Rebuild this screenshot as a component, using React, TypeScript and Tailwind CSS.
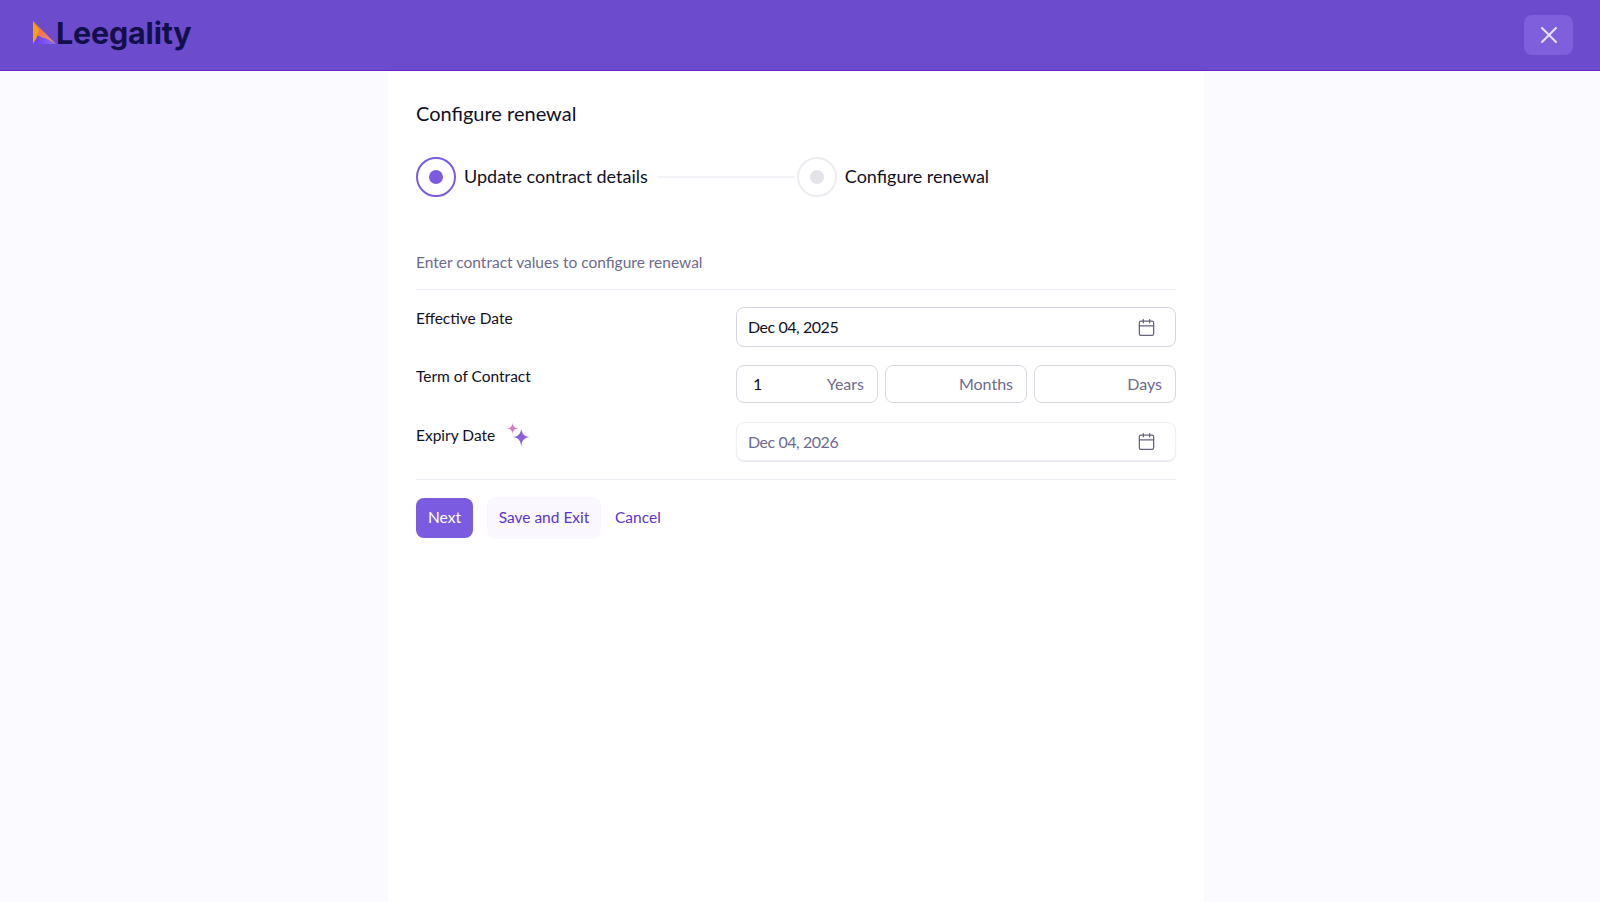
import { X, Calendar } from 'lucide-react';

const font = "font-['Lato','Noto_Sans',sans-serif]";

function Logo() {
    return (
        <div className="flex items-center mb-1">
            <svg width="23" height="23" viewBox="0 0 23 23" className="shrink-0 -mt-px">
                <defs>
                    <linearGradient id="logoBottom" x1="0" y1="0" x2="1" y2="0">
                        <stop offset="0" stopColor="#6a3df0" />
                        <stop offset="1" stopColor="#8f6af5" />
                    </linearGradient>
                    <linearGradient id="logoMid" x1="0" y1="0" x2="1" y2="1">
                        <stop offset="0" stopColor="#f4663f" />
                        <stop offset="1" stopColor="#f28a78" />
                    </linearGradient>
                </defs>
                <polygon points="0,0 23,23 5,15" fill="url(#logoMid)" />
                <polygon points="0,0 6,9 4,16 0,23" fill="#f5a30c" />
                <polygon points="0.5,23 5,15 14,18 23,23" fill="url(#logoBottom)" />
            </svg>
            <span className="text-[30.5px] leading-none font-bold text-[#12104a] tracking-[-0.2px] font-['Inter',sans-serif]">Leegality</span>
        </div>
    );
}

function Step({ label, active }: { label: string; active?: boolean }) {
    return (
        <div className="flex items-center gap-2">
            <div
                className={
                    active
                        ? 'w-10 h-10 rounded-full border-2 border-[#7b5be0] flex items-center justify-center bg-white'
                        : 'w-10 h-10 rounded-full border-2 border-[#ececf2] flex items-center justify-center bg-white'
                }
            >
                <div className={active ? 'w-3.5 h-3.5 rounded-full bg-[#7b5be0]' : 'w-3.5 h-3.5 rounded-full bg-[#e3e3ea]'} />
            </div>
            <span className="text-lg leading-6 -mt-0.5 text-[#11101f]">{label}</span>
        </div>
    );
}

function DateField({ value, muted }: { value: string; muted?: boolean }) {
    return (
        <div
            className={
                muted
                    ? 'h-[39px] mt-px rounded-lg border border-[#efeef5] shadow-[0_1px_1px_#e6e5ee] flex items-center justify-between pl-[11px] pr-[19px] text-base tracking-[-0.45px] text-[#6d6a8e]'
                    : 'h-10 rounded-lg border border-[#d5d4e0] flex items-center justify-between pl-[11px] pr-[19px] text-base tracking-[-0.45px] text-[#11101f]'
            }
        >
            <span>{value}</span>
            <Calendar size={19} strokeWidth={1.6} className="text-[#65637f]" />
        </div>
    );
}

function TermField({ value, unit }: { value?: string; unit: string }) {
    return (
        <div className="flex-1 h-[38px] rounded-lg border border-[#d9d8e3] flex items-center justify-between pl-4 pr-[13px] text-base">
            <span className="text-[#11101f]">{value}</span>
            <span className="text-[#6d6a8e]">{unit}</span>
        </div>
    );
}

function Sparkles() {
    return (
        <svg width="26" height="26" viewBox="0 0 24 24" className="ml-2.5 -mt-0.5">
            <path d="M7 0 C7.4 3.2 8.8 4.6 12 5 C8.8 5.4 7.4 6.8 7 10 C6.6 6.8 5.2 5.4 2 5 C5.2 4.6 6.6 3.2 7 0 Z" fill="#d67fc0" />
            <path d="M15 5 C15.6 10 17.5 12.4 23 13 C17.5 13.6 15.6 16 15 22 C14.4 16 12.5 13.6 7 13 C12.5 12.4 14.4 10 15 5 Z" fill="#8a63dc" />
        </svg>
    );
}

export default function App() {
    return (
        <div className={`${font} w-full h-[902px] flex flex-col bg-[#fbfaff] overflow-hidden`}>
            {/* 상단 바 */}
            <header className="h-[71px] shrink-0 bg-[#6c4bcc] border-b border-[#6a1fd0] flex items-center justify-between pl-[33px] pr-[27px]">
                <Logo />
                <button className="w-[49px] h-10 rounded-lg bg-[#7f5fdc] flex items-center justify-center">
                    <X size={28} strokeWidth={1.8} className="text-[#e4e0f5]" />
                </button>
            </header>

            {/* 본문 패널 */}
            <div className="flex-1 flex justify-center pr-2">
                <main className="w-[816px] bg-white pl-7 pr-7 pt-[29px]">
                    <h1 className="text-xl leading-[26px] text-[#11101f]">Configure renewal</h1>

                    <div className="flex items-center mt-[31px]">
                        <Step label="Update contract details" active />
                        <div className="w-[138px] h-0.5 bg-[#f3f3f8] ml-[9px] mr-0.5" />
                        <Step label="Configure renewal" />
                    </div>

                    <p className="mt-[55px] text-[15.5px] leading-5 text-[#6d6a8e] pb-[17px] border-b border-[#eceaf2]">Enter contract values to configure renewal</p>

                    <div className="grid grid-cols-[320px_1fr] gap-y-[18px] pt-[17px] pb-[18px] border-b border-[#eceaf2]">
                        <div className="text-[15.5px] leading-5 text-[#11101f] pt-px">Effective Date</div>
                        <DateField value="Dec 04, 2025" />

                        <div className="text-[15.5px] leading-5 text-[#11101f] pt-px">Term of Contract</div>
                        <div className="flex gap-[7px]">
                            <TermField value="1" unit="Years" />
                            <TermField unit="Months" />
                            <TermField unit="Days" />
                        </div>

                        <div className="flex items-start text-[15.5px] leading-5 text-[#11101f] pt-1">
                            Expiry Date
                            <Sparkles />
                        </div>
                        <DateField value="Dec 04, 2026" muted />
                    </div>

                    <div className="flex items-center mt-[17px] text-[15.5px]">
                        <button className="h-10 w-[57px] rounded-lg bg-[#7b5be0] text-white">Next</button>
                        <button className="h-[42px] w-[114px] ml-3.5 rounded-lg bg-[#fbf7ff] text-[#5a35d0]">Save and Exit</button>
                        <button className="ml-3.5 text-[#5a35d0]">Cancel</button>
                    </div>
                </main>
            </div>
        </div>
    );
}
